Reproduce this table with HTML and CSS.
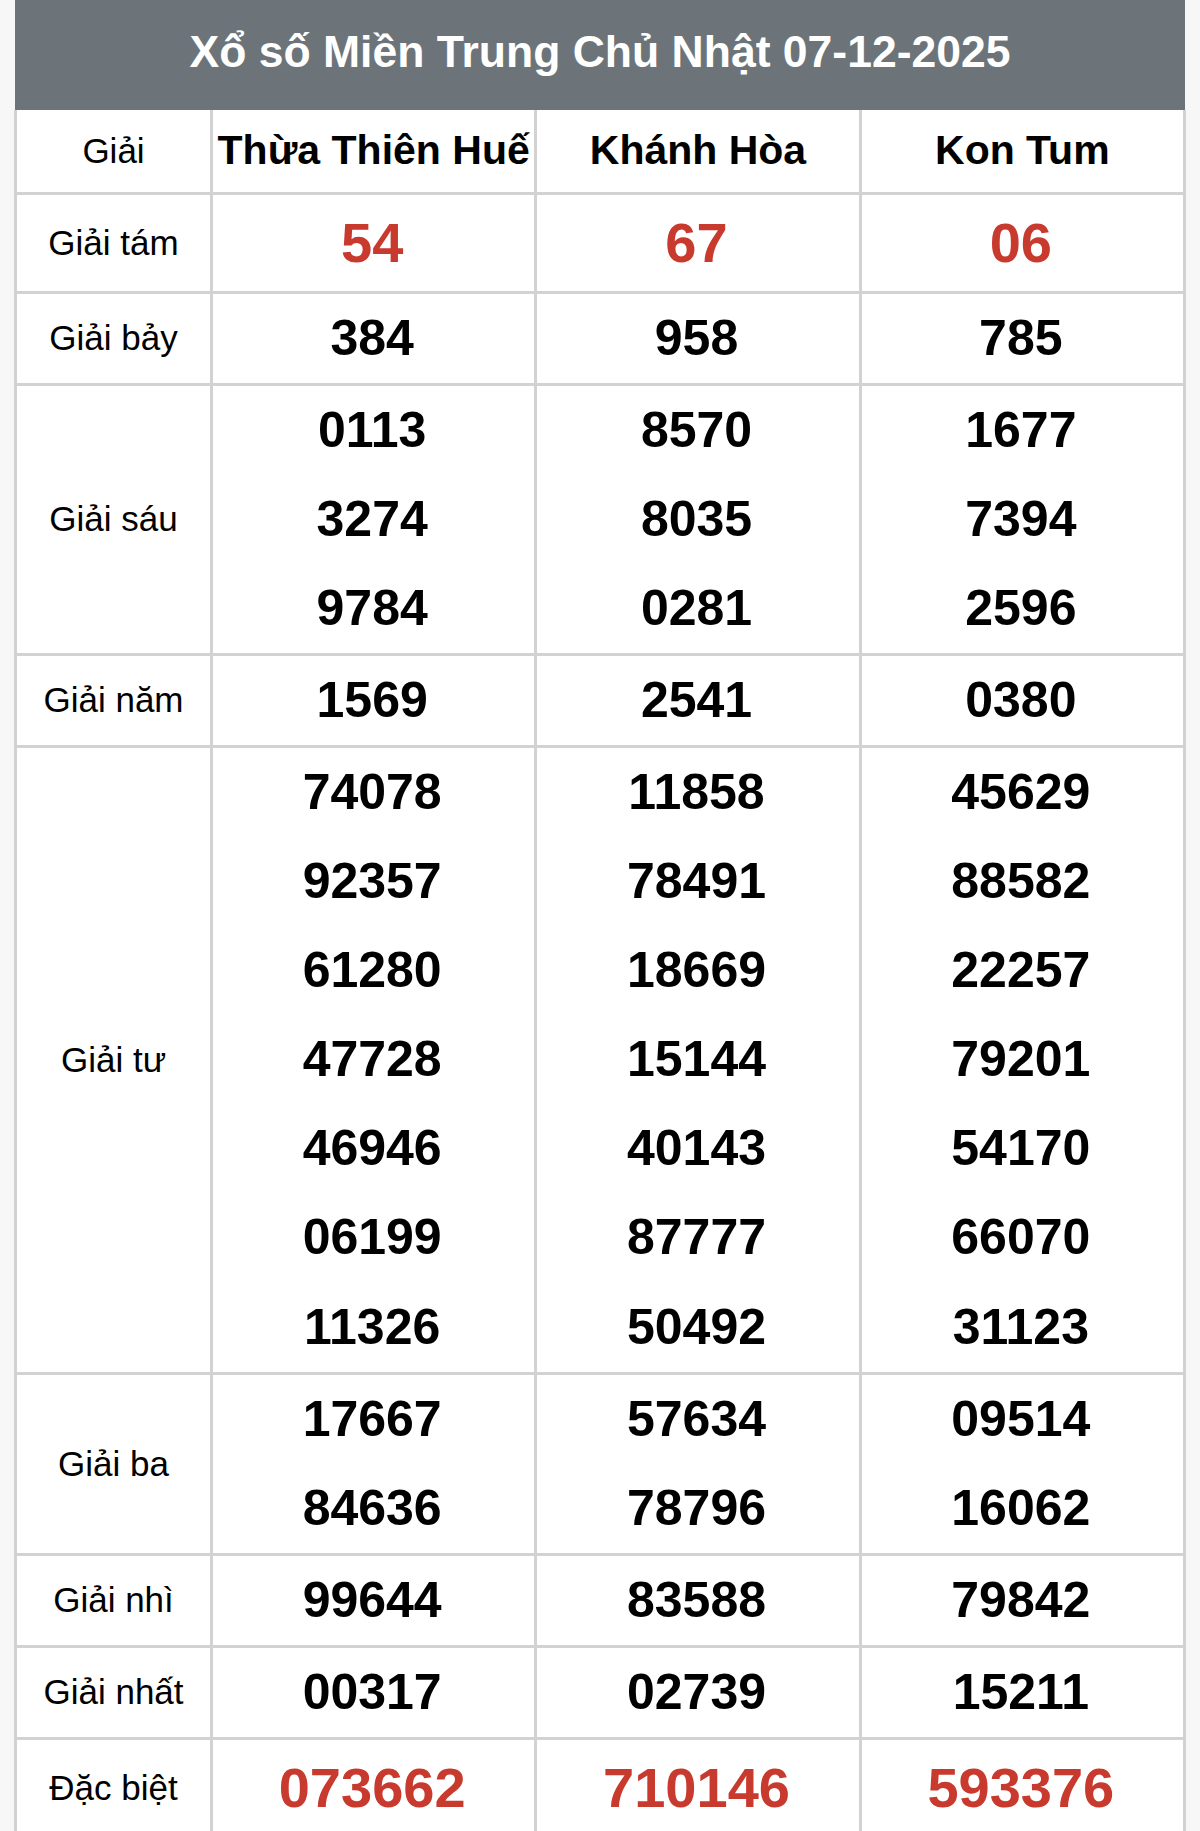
FILE: index.html
```html
<!DOCTYPE html>
<html lang="vi">
<head>
<meta charset="utf-8">
<title>Xổ số Miền Trung Chủ Nhật 07-12-2025</title>
<link rel="stylesheet" href="styles.css">
</head>
<body>
<div class="wrap">
  <div class="title">Xổ số Miền Trung Chủ Nhật 07-12-2025</div>
  <table class="kq">
    <colgroup>
      <col class="c-label"><col class="c-prov"><col class="c-prov"><col class="c-prov">
    </colgroup>
    <thead>
      <tr>
        <th class="lbl">Giải</th>
        <th>Thừa Thiên Huế</th>
        <th>Khánh Hòa</th>
        <th>Kon Tum</th>
      </tr>
    </thead>
    <tbody>
      <tr class="big">
        <td class="lbl">Giải tám</td>
        <td><div class="n red">54</div></td>
        <td><div class="n red">67</div></td>
        <td><div class="n red">06</div></td>
      </tr>
      <tr>
        <td class="lbl">Giải bảy</td>
        <td><div class="n">384</div></td>
        <td><div class="n">958</div></td>
        <td><div class="n">785</div></td>
      </tr>
      <tr>
        <td class="lbl">Giải sáu</td>
        <td><div class="n">0113</div><div class="n">3274</div><div class="n">9784</div></td>
        <td><div class="n">8570</div><div class="n">8035</div><div class="n">0281</div></td>
        <td><div class="n">1677</div><div class="n">7394</div><div class="n">2596</div></td>
      </tr>
      <tr>
        <td class="lbl">Giải năm</td>
        <td><div class="n">1569</div></td>
        <td><div class="n">2541</div></td>
        <td><div class="n">0380</div></td>
      </tr>
      <tr>
        <td class="lbl">Giải tư</td>
        <td><div class="n">74078</div><div class="n">92357</div><div class="n">61280</div><div class="n">47728</div><div class="n">46946</div><div class="n">06199</div><div class="n">11326</div></td>
        <td><div class="n">11858</div><div class="n">78491</div><div class="n">18669</div><div class="n">15144</div><div class="n">40143</div><div class="n">87777</div><div class="n">50492</div></td>
        <td><div class="n">45629</div><div class="n">88582</div><div class="n">22257</div><div class="n">79201</div><div class="n">54170</div><div class="n">66070</div><div class="n">31123</div></td>
      </tr>
      <tr>
        <td class="lbl">Giải ba</td>
        <td><div class="n">17667</div><div class="n">84636</div></td>
        <td><div class="n">57634</div><div class="n">78796</div></td>
        <td><div class="n">09514</div><div class="n">16062</div></td>
      </tr>
      <tr>
        <td class="lbl">Giải nhì</td>
        <td><div class="n">99644</div></td>
        <td><div class="n">83588</div></td>
        <td><div class="n">79842</div></td>
      </tr>
      <tr>
        <td class="lbl">Giải nhất</td>
        <td><div class="n">00317</div></td>
        <td><div class="n">02739</div></td>
        <td><div class="n">15211</div></td>
      </tr>
      <tr class="big">
        <td class="lbl">Đặc biệt</td>
        <td><div class="n red">073662</div></td>
        <td><div class="n red">710146</div></td>
        <td><div class="n red">593376</div></td>
      </tr>
    </tbody>
  </table>
</div>
</body>
</html>
```

FILE: styles.css
```css
html, body {
  margin: 0;
  padding: 0;
  background: #f7f7f7;
}

body {
  font-family: "Liberation Sans", Arial, sans-serif;
  color: #000;
}

.wrap {
  margin: 0 14px 0 14px;
}

.title {
  background: #6c7479;
  color: #fff;
  font-weight: bold;
  font-size: 44.5px;
  height: 110px;
  line-height: 104px;
  text-align: center;
  margin: 0 1px;
}

.kq {
  width: 100%;
  border-collapse: collapse;
  table-layout: fixed;
  background: #fff;
}

.c-label { width: 196px; }

.kq th,
.kq td {
  border: 3px solid #d2d2d2;
  padding: 0;
  text-align: center;
  vertical-align: middle;
}

.kq thead tr {
  height: 83px;
}

.kq th {
  font-size: 41px;
  font-weight: bold;
  white-space: nowrap;
  border-top: 0;
}

.kq th.lbl,
.kq td.lbl {
  font-weight: normal;
  font-size: 35px;
}

.n {
  font-weight: bold;
  font-size: 50px;
  line-height: 89.1px;
  padding-right: 3px;
}

.big .n {
  line-height: 96px;
}

.n.red {
  color: #c8392e;
  font-size: 56px;
}
```
